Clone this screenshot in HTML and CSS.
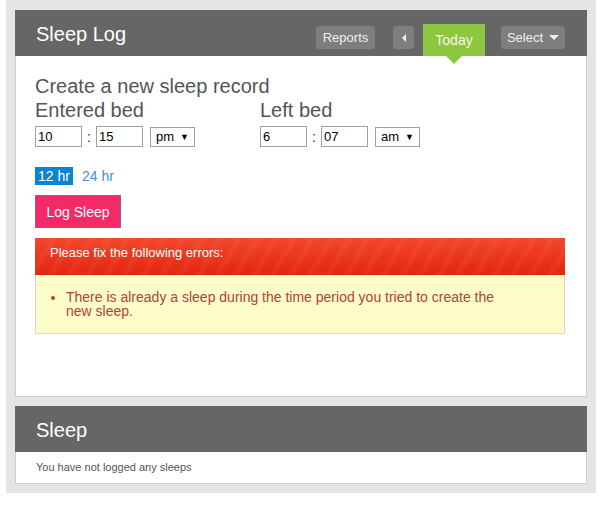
FILE: index.html
```html
<!DOCTYPE html>
<html>

<head>
  <meta charset="UTF-8">
  <title>Sleep Log</title>
  <link rel="stylesheet" href="styles.css">
</head>

<body>
  <div class="wrapper">
    <div class="panel">
      <div class="panel-header">
        <h2 class="panel-title">Sleep Log</h2>
        <div class="nav">
          <a href="#" class="nav-btn reports">Reports</a>
          <a href="#" class="nav-btn prev"><span class="arrow-left"></span></a>
          <a href="#" class="today">Today</a>
          <a href="#" class="nav-btn select">Select <span class="caret"></span></a>
        </div>
      </div>

      <div class="panel-body">
        <h3 class="form-title">Create a new sleep record</h3>
        <div class="times">
          <div class="time-col">
            <h3 class="time-label">Entered bed</h3>
            <div class="time-inputs">
              <input type="text" class="time-box" value="10">
              <span class="colon">:</span>
              <input type="text" class="time-box" value="15">
              <div class="ampm">pm <span class="tri">&#9660;</span></div>
            </div>
          </div>
          <div class="time-col">
            <h3 class="time-label">Left bed</h3>
            <div class="time-inputs">
              <input type="text" class="time-box" value="6">
              <span class="colon">:</span>
              <input type="text" class="time-box" value="07">
              <div class="ampm">am <span class="tri">&#9660;</span></div>
            </div>
          </div>
        </div>

        <div class="clock-mode">
          <span class="mode selected">12 hr</span>
          <a href="#" class="mode">24 hr</a>
        </div>

        <button class="log-btn">Log Sleep</button>

        <div class="errors">
          <div class="errors-head">Please fix the following errors:</div>
          <div class="errors-body">
            <ul>
              <li>There is already a sleep during the time period you tried to create the new sleep.</li>
            </ul>
          </div>
        </div>
      </div>
    </div>

    <div class="panel second">
      <div class="panel-header">
        <h2 class="panel-title">Sleep</h2>
      </div>
      <div class="empty">You have not logged any sleeps</div>
    </div>
  </div>
</body>

</html>
```

FILE: styles.css
```css
body {
  margin: 0;
  font-family: "Liberation Sans", Arial, sans-serif;
  background-color: #fff;
}

.wrapper {
  width: 572px;
  margin-left: 6px;
  padding: 10px 9px 9px 9px;
  background-color: #e4e5e5;
}

.panel {
  background-color: #fff;
  border: 1px solid #cdcdcd;
}

.panel.second {
  margin-top: 9px;
}

.panel-header {
  display: flex;
  align-items: flex-end;
  height: 46px;
  background-color: #666;
  margin: -1px -1px 0 -1px;
}

.panel-title {
  align-self: center;
  flex: 1;
  margin: 0;
  padding: 1px 0 0 21px;
  font-size: 20px;
  font-weight: normal;
  color: #fff;
  line-height: 24px;
}

.nav {
  display: flex;
  align-items: flex-end;
  padding-right: 22px;
}

.nav a {
  text-decoration: none;
}

.nav-btn {
  display: flex;
  align-items: center;
  justify-content: center;
  height: 23px;
  margin-bottom: 7px;
  background-color: #7e7e7e;
  border-radius: 3px;
  color: #eee;
  font-size: 13px;
}

.reports {
  width: 59px;
  margin-right: 18px;
}

.prev {
  width: 21px;
  margin-right: 9px;
}

.arrow-left {
  width: 0;
  height: 0;
  border-top: 4px solid transparent;
  border-bottom: 4px solid transparent;
  border-right: 4px solid #eee;
}

.today {
  position: relative;
  display: flex;
  align-items: center;
  justify-content: center;
  width: 62px;
  height: 32px;
  background-color: #8dc63f;
  color: #f6f6e8;
  font-size: 14px;
  margin-right: 16px;
}

.today::after {
  content: "";
  position: absolute;
  left: 23px;
  top: 32px;
  border-left: 8px solid transparent;
  border-right: 8px solid transparent;
  border-top: 8px solid #8dc63f;
}

.select {
  width: 64px;
}

.caret {
  display: inline-block;
  width: 0;
  height: 0;
  margin-left: 6px;
  border-left: 5px solid transparent;
  border-right: 5px solid transparent;
  border-top: 5px solid #eee;
}

.panel-body {
  padding: 18px 21px 62px 19px;
}

.form-title,
.time-label {
  margin: 0;
  font-size: 20px;
  font-weight: normal;
  line-height: 24px;
  color: #555;
}

.times {
  display: grid;
  grid-template-columns: 225px 225px;
}

.time-inputs {
  display: flex;
  align-items: center;
  margin-top: 4px;
}

.time-box {
  width: 47px;
  height: 21px;
  box-sizing: border-box;
  margin: 0;
  padding: 1px 2px;
  border: 1px solid #a0a0a0;
  font-family: "Liberation Sans", Arial, sans-serif;
  font-size: 13px;
  color: #000;
}

.colon {
  width: 14px;
  text-align: center;
  font-size: 14px;
  color: #333;
}

.ampm {
  display: flex;
  align-items: center;
  justify-content: space-between;
  width: 45px;
  height: 20px;
  box-sizing: border-box;
  margin-left: 7px;
  padding: 0 5px 0 5px;
  border: 1px solid #a0a0a0;
  font-size: 13px;
  color: #000;
}

.tri {
  font-size: 9px;
}

.clock-mode {
  display: flex;
  align-items: center;
  margin-top: 20px;
}

.mode {
  display: inline-block;
  height: 18px;
  line-height: 18px;
  padding: 0 3px;
  font-size: 14px;
  color: #4a8dd8;
  text-decoration: none;
  margin-right: 4px;
}

.mode.selected {
  background-color: #0b84d2;
  color: #fff;
  margin-right: 6px;
}

.log-btn {
  display: block;
  width: 86px;
  height: 33px;
  margin-top: 10px;
  padding: 0;
  background-color: #f42a68;
  border: 1px solid #7b62b8;
  color: #fff;
  font-family: "Liberation Sans", Arial, sans-serif;
  font-size: 14px;
  cursor: pointer;
}

.errors {
  margin-top: 10px;
}

.errors-head {
  height: 37px;
  box-sizing: border-box;
  padding: 7px 15px 0 15px;
  font-size: 13px;
  color: #fff;
  background-color: #e8291b;
  background-image:
    repeating-linear-gradient(-60deg, rgba(255, 255, 255, 0) 0 10px, rgba(255, 255, 255, 0.04) 10px 16px),
    linear-gradient(#f2472d, #e4250f);
}

.errors-body {
  background-color: #fefdca;
  border: 1px solid #d8d8c4;
  border-top: none;
  padding: 15px 47px 15px 0;
}

.errors-body ul {
  margin: 0;
  padding-left: 30px;
}

.errors-body li {
  font-size: 14px;
  line-height: 14px;
  color: #b4403a;
}

.empty {
  height: 31px;
  line-height: 31px;
  padding-left: 20px;
  font-size: 11px;
  color: #555;
}
```
